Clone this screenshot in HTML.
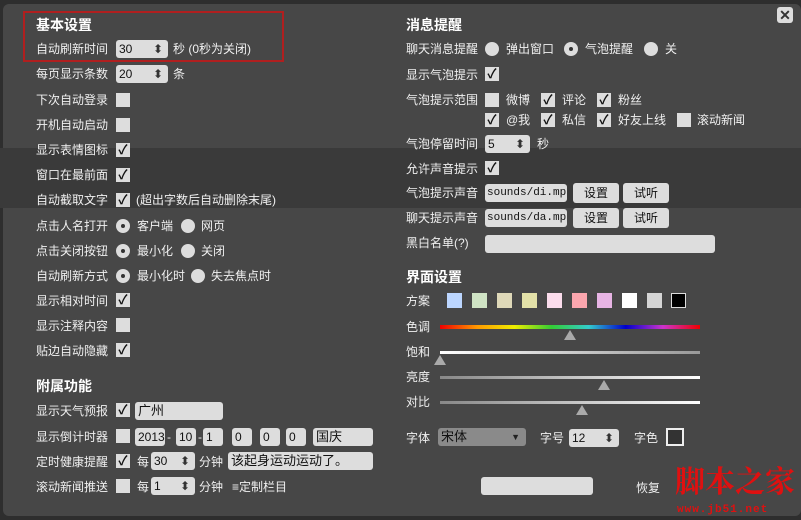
<!DOCTYPE html>
<html><head><meta charset="utf-8"><style>
*{margin:0;padding:0;box-sizing:border-box}
body{width:801px;height:520px;overflow:hidden;background:#2e2e2e;font-family:"Liberation Sans","Noto Sans CJK SC",sans-serif;font-size:12px;color:#f0f0f0;position:relative}
.p{position:absolute;left:3px;top:4px;width:798px;height:512px;background:#474747;border-radius:6px}
.band{position:absolute;left:0;top:148px;width:801px;height:60px;background:#3a3a3a}
.t{position:absolute;white-space:nowrap;line-height:16px}
.h{font-weight:bold;font-size:14px;color:#fff}
.cb{position:absolute;width:14px;height:14px;background:#ddd;color:#111;font-size:13px;line-height:14px;text-align:center;font-weight:bold}
.rd{position:absolute;width:14px;height:14px;border-radius:50%;background:#ddd}
.rd.on::after{content:"";position:absolute;left:5px;top:5px;width:4px;height:4px;border-radius:50%;background:#333}
.in{position:absolute;height:18px;background:#ddd;border-radius:3px;color:#111;font-size:12px;line-height:18px;padding-left:3px;overflow:hidden;white-space:nowrap}
.sp::after{content:"⬍";position:absolute;right:5px;top:0;font-size:12px;color:#333}
.mono{font-family:'Liberation Mono',monospace;font-size:11px;padding-left:2px}
.bt{position:absolute;height:20px;background:#ddd;border-radius:3px;color:#111;text-align:center;line-height:20px}
.sw{position:absolute;top:293px;width:15px;height:15px}
.tri{position:absolute;width:0;height:0;border-left:6px solid transparent;border-right:6px solid transparent;border-bottom:10px solid #aaa}
</style></head><body>
<div class="p"></div>
<div class="band"></div>
<div style="position:absolute;left:23px;top:11px;width:261px;height:51px;border:2px solid #b01f1f"></div>
<div style="position:absolute;left:777px;top:7px;width:16px;height:16px;background:#ddd;border-radius:3px;color:#333;font-size:14px;line-height:16px;text-align:center;font-weight:bold">✕</div>

<div class="t h" style="left:36px;top:17px">基本设置</div>
<div class="t" style="left:36px;top:41px">自动刷新时间</div><div class="in sp" style="left:116px;top:40px;width:52px">30</div><div class="t" style="left:173px;top:41px">秒 (0秒为关闭)</div>
<div class="t" style="left:36px;top:66px">每页显示条数</div><div class="in sp" style="left:116px;top:65px;width:52px">20</div><div class="t" style="left:173px;top:66px">条</div>
<div class="t" style="left:36px;top:92px">下次自动登录</div><div class="cb" style="left:116px;top:93px"></div>
<div class="t" style="left:36px;top:117px">开机自动启动</div><div class="cb" style="left:116px;top:118px"></div>
<div class="t" style="left:36px;top:142px">显示表情图标</div><div class="cb" style="left:116px;top:143px">✓</div>
<div class="t" style="left:36px;top:167px">窗口在最前面</div><div class="cb" style="left:116px;top:168px">✓</div>
<div class="t" style="left:36px;top:192px">自动截取文字</div><div class="cb" style="left:116px;top:193px">✓</div><div class="t" style="left:136px;top:192px">(超出字数后自动删除末尾)</div>
<div class="t" style="left:36px;top:218px">点击人名打开</div><div class="rd on" style="left:116px;top:219px"></div><div class="t" style="left:137px;top:218px">客户端</div><div class="rd" style="left:181px;top:219px"></div><div class="t" style="left:201px;top:218px">网页</div>
<div class="t" style="left:36px;top:243px">点击关闭按钮</div><div class="rd on" style="left:116px;top:244px"></div><div class="t" style="left:137px;top:243px">最小化</div><div class="rd" style="left:181px;top:244px"></div><div class="t" style="left:201px;top:243px">关闭</div>
<div class="t" style="left:36px;top:268px">自动刷新方式</div><div class="rd on" style="left:116px;top:269px"></div><div class="t" style="left:137px;top:268px">最小化时</div><div class="rd" style="left:191px;top:269px"></div><div class="t" style="left:211px;top:268px">失去焦点时</div>
<div class="t" style="left:36px;top:293px">显示相对时间</div><div class="cb" style="left:116px;top:293px">✓</div>
<div class="t" style="left:36px;top:318px">显示注释内容</div><div class="cb" style="left:116px;top:318px"></div>
<div class="t" style="left:36px;top:343px">贴边自动隐藏</div><div class="cb" style="left:116px;top:343px">✓</div>
<div class="t h" style="left:36px;top:378px">附属功能</div>
<div class="t" style="left:36px;top:403px">显示天气预报</div><div class="cb" style="left:116px;top:403px">✓</div><div class="in" style="left:135px;top:402px;width:88px;font-size:13px">广州</div>
<div class="t" style="left:36px;top:429px">显示倒计时器</div><div class="cb" style="left:116px;top:429px"></div>
<div class="in" style="left:135px;top:428px;width:30px">2013</div><div class="t" style="left:167px;top:429px">-</div><div class="in" style="left:176px;top:428px;width:20px">10</div><div class="t" style="left:198px;top:429px">-</div><div class="in" style="left:203px;top:428px;width:20px">1</div>
<div class="in" style="left:232px;top:428px;width:20px">0</div><div class="in" style="left:260px;top:428px;width:20px">0</div><div class="in" style="left:286px;top:428px;width:20px">0</div><div class="in" style="left:313px;top:428px;width:60px;font-size:13px">国庆</div>
<div class="t" style="left:36px;top:454px">定时健康提醒</div><div class="cb" style="left:116px;top:454px">✓</div><div class="t" style="left:137px;top:454px">每</div><div class="in sp" style="left:151px;top:452px;width:44px">30</div><div class="t" style="left:199px;top:454px">分钟</div><div class="in" style="left:228px;top:452px;width:145px;font-size:13px">该起身运动运动了。</div>
<div class="t" style="left:36px;top:479px">滚动新闻推送</div><div class="cb" style="left:116px;top:479px"></div><div class="t" style="left:137px;top:479px">每</div><div class="in sp" style="left:151px;top:477px;width:44px">1</div><div class="t" style="left:199px;top:479px">分钟</div><div class="t" style="left:232px;top:479px">≡定制栏目</div>

<div class="t h" style="left:406px;top:17px">消息提醒</div>
<div class="t" style="left:406px;top:41px">聊天消息提醒</div><div class="rd" style="left:485px;top:42px"></div><div class="t" style="left:506px;top:41px">弹出窗口</div><div class="rd on" style="left:564px;top:42px"></div><div class="t" style="left:585px;top:41px">气泡提醒</div><div class="rd" style="left:644px;top:42px"></div><div class="t" style="left:665px;top:41px">关</div>
<div class="t" style="left:406px;top:67px">显示气泡提示</div><div class="cb" style="left:485px;top:67px">✓</div>
<div class="t" style="left:406px;top:92px">气泡提示范围</div><div class="cb" style="left:485px;top:93px"></div><div class="t" style="left:506px;top:92px">微博</div><div class="cb" style="left:541px;top:93px">✓</div><div class="t" style="left:562px;top:92px">评论</div><div class="cb" style="left:597px;top:93px">✓</div><div class="t" style="left:618px;top:92px">粉丝</div>
<div class="cb" style="left:485px;top:113px">✓</div><div class="t" style="left:506px;top:112px">@我</div><div class="cb" style="left:541px;top:113px">✓</div><div class="t" style="left:562px;top:112px">私信</div><div class="cb" style="left:597px;top:113px">✓</div><div class="t" style="left:618px;top:112px">好友上线</div><div class="cb" style="left:677px;top:113px"></div><div class="t" style="left:697px;top:112px">滚动新闻</div>
<div class="t" style="left:406px;top:136px">气泡停留时间</div><div class="in sp" style="left:485px;top:135px;width:45px">5</div><div class="t" style="left:537px;top:136px">秒</div>
<div class="t" style="left:406px;top:161px">允许声音提示</div><div class="cb" style="left:485px;top:161px">✓</div>
<div class="t" style="left:406px;top:185px">气泡提示声音</div><div class="in mono" style="left:485px;top:184px;width:82px">sounds/di.mp3</div><div class="bt" style="left:573px;top:183px;width:46px">设置</div><div class="bt" style="left:623px;top:183px;width:46px">试听</div>
<div class="t" style="left:406px;top:210px">聊天提示声音</div><div class="in mono" style="left:485px;top:209px;width:82px">sounds/da.mp3</div><div class="bt" style="left:573px;top:208px;width:46px">设置</div><div class="bt" style="left:623px;top:208px;width:46px">试听</div>
<div class="t" style="left:406px;top:235px">黑白名单(?)</div><div class="in" style="left:485px;top:235px;width:230px"></div>

<div class="t h" style="left:406px;top:269px">界面设置</div>
<div class="t" style="left:406px;top:293px">方案</div>
<div class="sw" style="left:447px;background:#bcd6ff"></div><div class="sw" style="left:472px;background:#cfe3c4"></div><div class="sw" style="left:497px;background:#ded8b8"></div><div class="sw" style="left:522px;background:#e3e1a8"></div><div class="sw" style="left:547px;background:#fbdcec"></div><div class="sw" style="left:572px;background:#fba6ae"></div><div class="sw" style="left:597px;background:#e7b4e4"></div><div class="sw" style="left:622px;background:#fff"></div><div class="sw" style="left:647px;background:#d5d5d5"></div><div class="sw" style="left:671px;background:#000;border:1px solid #ddd"></div>
<div class="t" style="left:406px;top:319px">色调</div><div style="position:absolute;left:440px;top:325px;width:260px;height:4px;background:linear-gradient(90deg,#e00,#f90,#ee0,#3c3,#3cc,#00c,#c3c,#e00)"></div><div class="tri" style="left:564px;top:330px"></div>
<div class="t" style="left:406px;top:344px">饱和</div><div style="position:absolute;left:440px;top:351px;width:260px;height:3px;background:linear-gradient(90deg,#fff,#999)"></div><div class="tri" style="left:434px;top:355px"></div>
<div class="t" style="left:406px;top:369px">亮度</div><div style="position:absolute;left:440px;top:376px;width:260px;height:3px;background:linear-gradient(90deg,#888,#fff)"></div><div class="tri" style="left:598px;top:380px"></div>
<div class="t" style="left:406px;top:394px">对比</div><div style="position:absolute;left:440px;top:401px;width:260px;height:3px;background:linear-gradient(90deg,#888,#fff)"></div><div class="tri" style="left:576px;top:405px"></div>
<div class="t" style="left:406px;top:430px">字体</div><div class="in" style="left:438px;top:428px;width:88px;background:#8a8a8a;font-size:13px">宋体<span style="position:absolute;right:6px;font-size:9px;color:#222">▼</span></div>
<div class="t" style="left:540px;top:430px">字号</div><div class="in sp" style="left:569px;top:429px;width:50px">12</div>
<div class="t" style="left:634px;top:430px">字色</div><div style="position:absolute;left:666px;top:428px;width:18px;height:18px;border:2px solid #eee;background:#333"></div>
<div class="t" style="left:636px;top:480px">恢复</div>
<div class="in" style="left:481px;top:477px;width:112px"></div>
<div class="t" style="left:675px;top:466px;font-family:'Liberation Serif','Noto Serif CJK SC',serif;font-size:30px;line-height:34px;color:#e01010;font-weight:bold">脚本之家</div>
<div class="t" style="left:677px;top:502px;font-family:'Liberation Mono',monospace;font-size:11px;color:#e01010;font-weight:bold;letter-spacing:1px">www.jb51.net</div>
</body></html>
